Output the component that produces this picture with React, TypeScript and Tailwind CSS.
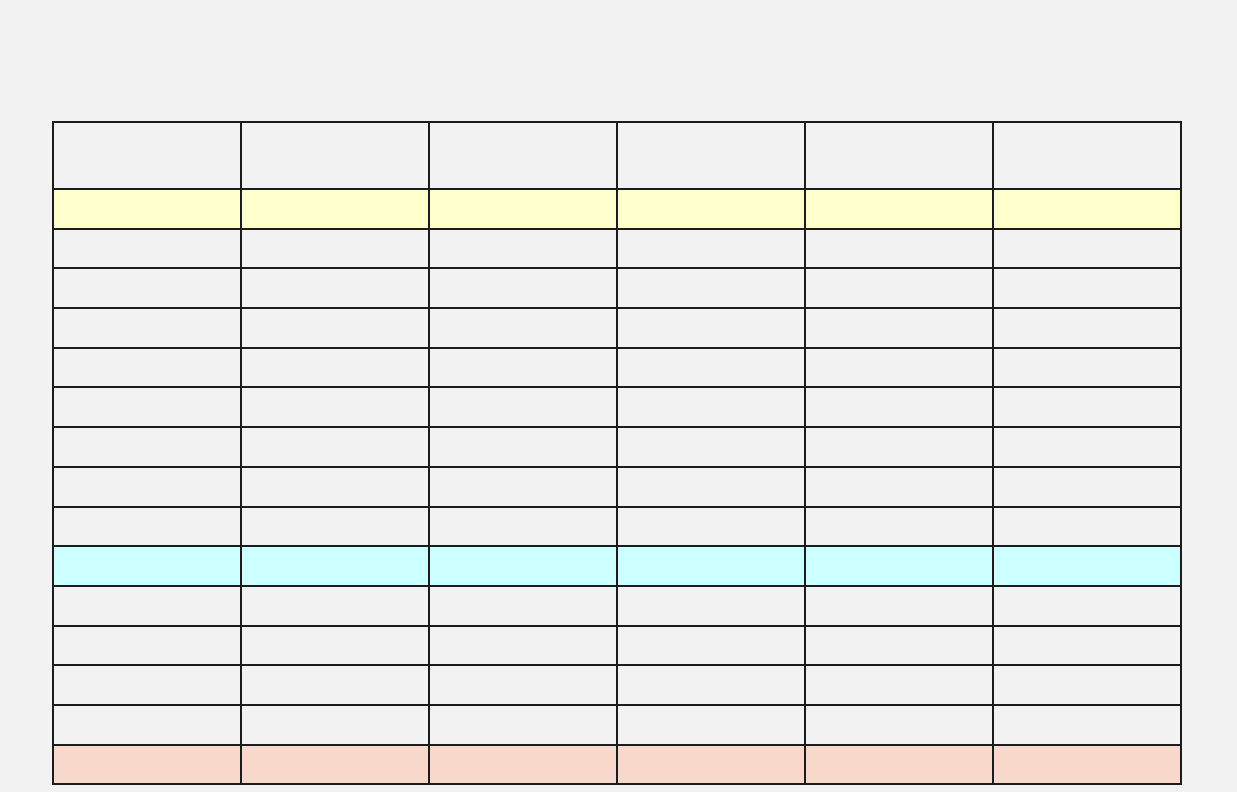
const rows = [
  "bg-[#ffffcc]",
  "",
  "",
  "",
  "",
  "",
  "",
  "",
  "",
  "bg-[#ccffff]",
  "",
  "",
  "",
  "",
  "bg-[#f8d8cb]",
];
const cols = [0, 1, 2, 3, 4, 5];

export default function App() {
  return (
    <div className="w-[1237px] h-[792px] overflow-hidden bg-[#f2f2f2] pt-[121px] pl-[52px] font-['Liberation_Sans',sans-serif]">
      <table className="w-[1130px] border-collapse table-fixed">
        <thead>
          <tr className="h-[67px]">
            {cols.map((c) => (
              <th key={c} className="border-2 border-[#1c1c1c] font-normal" />
            ))}
          </tr>
        </thead>
        <tbody>
          {rows.map((bg, i) => (
            <tr key={i} className={`h-[39.7px] ${bg}`}>
              {cols.map((c) => (
                <td key={c} className="border-2 border-[#1c1c1c]" />
              ))}
            </tr>
          ))}
        </tbody>
      </table>
    </div>
  );
}
